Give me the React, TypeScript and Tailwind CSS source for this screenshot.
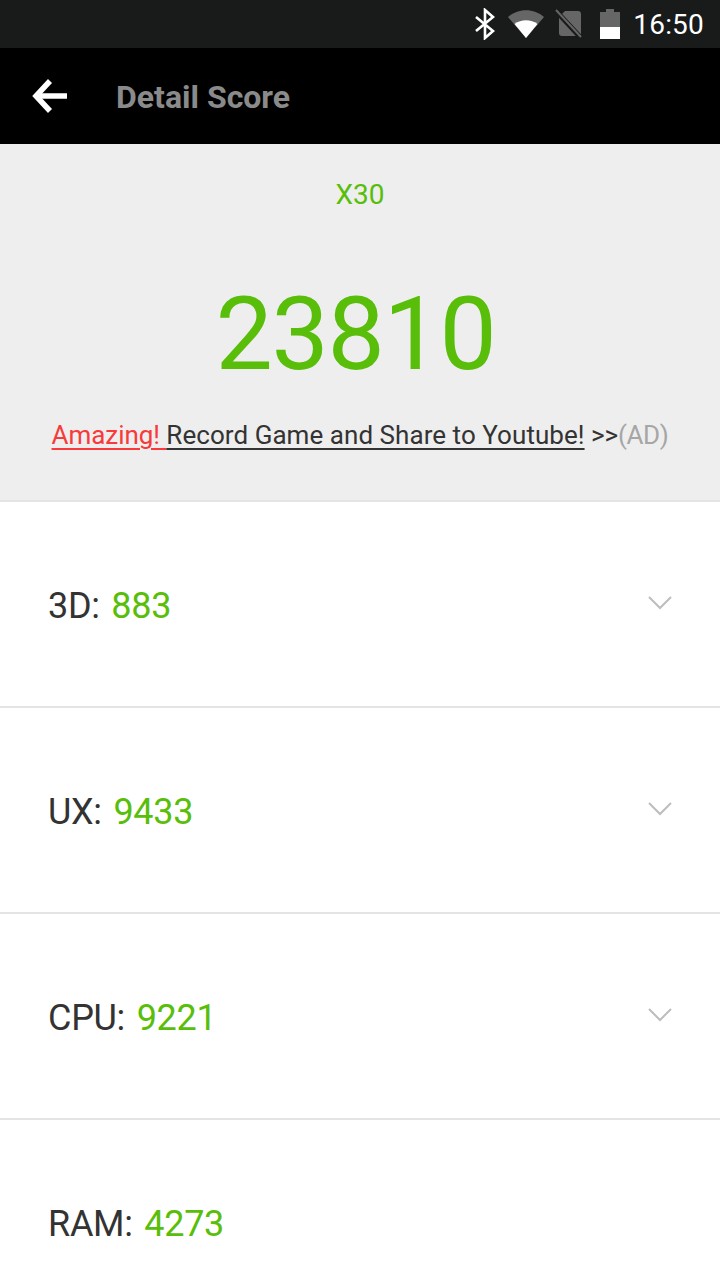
import React from "react";

function Chevron() {
  return (
    <svg width="26" height="16" viewBox="0 0 26 16" fill="none" className="mr-[47px] mb-[2px]">
      <path d="M2 2 L13 13 L24 2" stroke="#bdbdbd" strokeWidth="2" />
    </svg>
  );
}

function Row({ label, value, chevron = true }: { label: string; value: string; chevron?: boolean }) {
  return (
    <div className="h-[206px] shrink-0 flex items-center justify-between border-b-2 border-[#e4e4e4] pl-[48px]">
      <div className="text-[36px] leading-[42px] mt-[4px] text-[#333333] font-normal tracking-[-0.3px]">
        {label}&nbsp;<span className="text-[#58be0a] ml-[3px]">{value}</span>
      </div>
      {chevron && <Chevron />}
    </div>
  );
}

export default function App() {
  return (
    <div className="w-[720px] h-[1280px] overflow-hidden bg-white flex flex-col font-['Roboto',sans-serif]">
      <div className="h-[48px] shrink-0 bg-[#191a1a] flex items-center justify-end pr-[16px]">
        <svg width="24" height="32" viewBox="0 0 24 32" fill="none" className="mr-[11px]">
          <path d="M3 9 L20 23 L12 30 V2 L20 9 L3 23" stroke="#fff" strokeWidth="2.6" />
        </svg>
        <svg width="36" height="28" viewBox="0 0 36 28" className="mr-[11px]">
          <path d="M0 7 C10 -2 26 -2 36 7 L18 28 Z" fill="#666" />
          <path d="M6.5 14 C13 9 23 9 29.5 14 L18 28 Z" fill="#fff" />
        </svg>
        <svg width="28" height="30" viewBox="0 0 28 30" className="mr-[17px]">
          <path d="M10 2 H23 Q26 2 26 5 V24 Q26 27 23 27 H7 Q4 27 4 24 V8 Z" fill="#666" />
          <path d="M1 2 L26 29" stroke="#191a1a" strokeWidth="5" />
          <path d="M1 1 L26 28" stroke="#666" strokeWidth="2" />
        </svg>
        <svg width="20" height="30" viewBox="0 0 20 30" className="mr-[13px]">
          <path d="M6 0 H14 V3 H20 V30 H0 V3 H6 Z" fill="#666" />
          <rect x="0" y="18" width="20" height="12" fill="#fff" />
        </svg>
        <span className="text-[28px] leading-[36px] mt-[2px] text-white tracking-[0.2px]">16:50</span>
      </div>

      <div className="h-[96px] shrink-0 bg-black flex items-center">
        <svg width="36" height="36" viewBox="0 0 36 36" fill="none" className="ml-[32px] mr-[48px]">
          <path d="M35 18 H4" stroke="#fff" strokeWidth="5.5" />
          <path d="M18 3 L4 18 L18 33" stroke="#fff" strokeWidth="5.5" />
        </svg>
        <span className="text-[32px] leading-[40px] mt-[2px] font-bold text-[#8a8a8a]">Detail Score</span>
      </div>

      <div className="h-[358px] shrink-0 bg-[#eeeeee] border-b-2 border-[#e4e4e4] flex flex-col items-center">
        <div className="mt-[34px] text-[28px] leading-[34px] text-[#58be0a] font-normal">X30</div>
        <div className="mt-[61px] mr-[9px] text-[102px] leading-[122px] text-[#58be0a] font-normal tracking-[-1.3px]">23810</div>
        <div className="mt-[24px] text-[26px] leading-[32px] text-[#333333] font-normal tracking-[-0.05px] whitespace-nowrap">
          <span className="underline decoration-2 underline-offset-[4px] decoration-[#f83a3a] text-[#f83a3a]">Amazing! </span>
          <span className="underline decoration-2 underline-offset-[4px] decoration-[#333333] tracking-[0.05px]">Record Game and Share to Youtube!</span>{" "}
          <span>&gt;&gt;</span>
          <span className="text-[#a6a6a6] tracking-[-0.4px]">(AD)</span>
        </div>
      </div>

      <Row label="3D:" value="883" />
      <Row label="UX:" value="9433" />
      <Row label="CPU:" value="9221" />
      <Row label="RAM:" value="4273" chevron={false} />
    </div>
  );
}
